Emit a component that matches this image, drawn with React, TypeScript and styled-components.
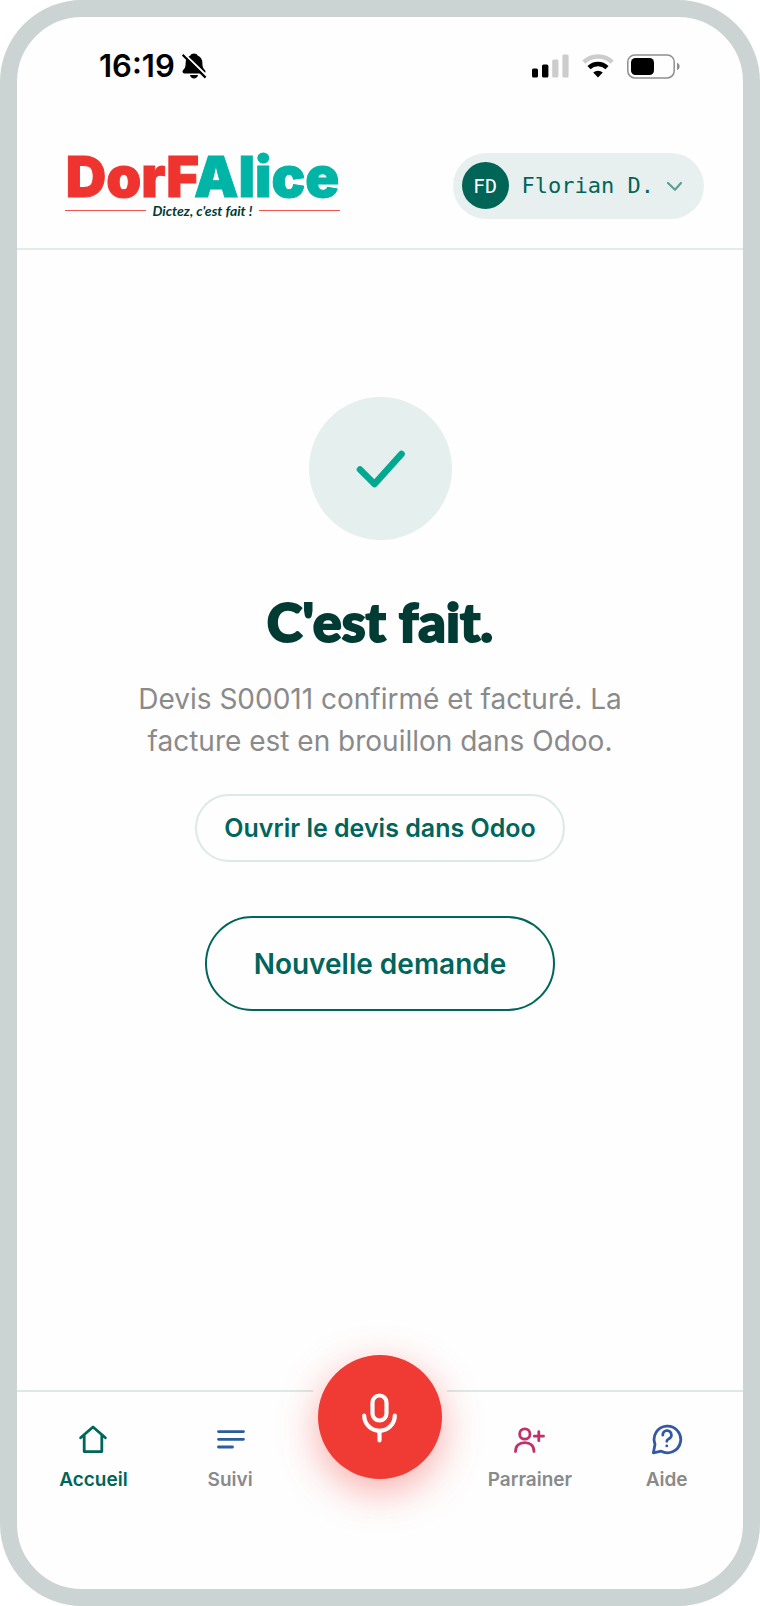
import React from "react";
import styled, { createGlobalStyle } from "styled-components";

const GlobalStyle = createGlobalStyle`
  * { box-sizing: border-box; }
  body { margin: 0; background: #ffffff; font-family: Inter, sans-serif; }
  button { font: inherit; border: 0; padding: 0; background: none; cursor: pointer; }
  h1, p { margin: 0; }
  svg { display: block; flex: none; }
`;

const Phone = styled.div`
  display: flex;
  flex-direction: column;
  min-height: 100vh;
  border: 17px solid #cbd4d2;
  border-radius: 82px;
  background: #fefefe;
`;

const StatusBar = styled.div`
  display: flex;
  align-items: center;
  justify-content: space-between;
  height: 98px;
  padding: 0 63px 0 82px;
  color: #000000;
`;

const StatusGroup = styled.div<{ $gap: number }>`
  display: flex;
  align-items: center;
  gap: ${(p) => p.$gap}px;
`;

const Clock = styled.span`
  font-size: 31px;
  line-height: 36px;
  font-weight: 600;
`;

const Header = styled.header`
  display: flex;
  align-items: center;
  justify-content: space-between;
  height: 135px;
  padding: 8px 39px 0 48px;
  border-bottom: 2px solid #e0eeea;
`;

const Logo = styled.a`
  display: flex;
  flex-direction: column;
  width: 275px;
  color: #013b33;
  text-decoration: none;
`;

const Wordmark = styled.span`
  font-size: 56px;
  line-height: 50px;
  font-weight: 900;
  text-align: center;
  white-space: nowrap;
`;

const WordPart = styled.span<{ $color: string }>`
  color: ${(p) => p.$color};
  -webkit-text-stroke: 1px ${(p) => p.$color};
`;

const Tagline = styled.span`
  display: flex;
  align-items: center;
  gap: 6px;
  font-family: Lato, sans-serif;
  font-size: 14px;
  line-height: 18px;
  font-style: italic;
  font-weight: 700;
  white-space: nowrap;

  &::before,
  &::after {
    content: "";
    flex: 1;
    height: 1px;
    background: #f2544f;
  }
`;

const Account = styled.button`
  display: flex;
  align-items: center;
  height: 66px;
  padding: 0 18px 0 9px;
  border-radius: 33px;
  background: #e8f0ef;
  color: #00655a;
  font-family: "DejaVu Sans Mono", monospace;
`;

const Avatar = styled.span`
  display: grid;
  place-items: center;
  width: 47px;
  height: 47px;
  margin-right: 13px;
  border-radius: 50%;
  background: #006457;
  color: #ffffff;
  font-size: 20px;
`;

const AccountName = styled.span`
  margin-right: 10px;
  font-size: 22px;
`;

const Main = styled.main`
  display: flex;
  flex: 1;
  flex-direction: column;
  align-items: center;
  padding: 147px 24px 40px;
  text-align: center;
`;

const Badge = styled.div`
  display: grid;
  place-items: center;
  width: 143px;
  height: 143px;
  border-radius: 50%;
  background: #e5efed;
`;

const Title = styled.h1`
  margin-top: 48px;
  color: #013b33;
  font-family: Lato, sans-serif;
  font-size: 54px;
  line-height: 68px;
  font-weight: 900;
  -webkit-text-stroke: 2px #013b33;
`;

const Message = styled.p`
  max-width: 520px;
  margin-top: 22px;
  color: #8a8a8a;
  font-size: 28px;
  line-height: 42px;
`;

const OpenLink = styled.a`
  display: flex;
  align-items: center;
  height: 68px;
  margin-top: 32px;
  padding: 0 27px;
  border: 2px solid #dceae6;
  border-radius: 34px;
  color: #00655a;
  font-size: 25px;
  font-weight: 600;
  text-decoration: none;
`;

const NewRequest = styled.button`
  height: 95px;
  margin-top: 54px;
  padding: 0 47px;
  border: 2px solid #00655a;
  border-radius: 48px;
  color: #00655a;
  font-size: 28px;
  font-weight: 600;
`;

const Nav = styled.nav`
  display: grid;
  grid-template-columns: 1fr 1fr 163px 1fr 1fr;
  height: 199px;
  padding: 0 8px;
  border-top: 2px solid #dceae6;
`;

const NavItem = styled.a<{ $active?: boolean }>`
  display: flex;
  flex-direction: column;
  align-items: center;
  gap: 12px;
  padding-top: 32px;
  color: ${(p) => (p.$active ? "#00655a" : "#8a8a8a")};
  font-size: 19px;
  line-height: 24px;
  font-weight: 600;
  text-decoration: none;
`;

const MicSlot = styled.div`
  justify-self: center;
  width: 134px;
  height: 89px;
  margin-top: -2px;
  padding: 0 5px;
  background: #fefefe;
`;

const MicButton = styled.button`
  display: grid;
  place-items: center;
  width: 124px;
  height: 124px;
  margin-top: -35px;
  border-radius: 50%;
  background: #f03b34;
  box-shadow: 0 12px 40px rgba(240, 59, 52, 0.42);
`;

const BellOff = () => (
  <svg width="25" height="26" viewBox="0 0 25 26" aria-hidden="true">
    <path d="M12 0.5C13.6 0.5 15 1.2 15.6 2.4C18.8 3.6 20.4 6.4 20.4 10C20.4 14.4 21.4 15.4 23 17.2C24 18.4 23.6 20.4 22 20.4H2.2C0.6 20.4 0 18.4 1 17.2C2.8 15.4 3.6 14.4 3.6 10C3.6 6.4 5.4 3.6 8.4 2.4C9 1.2 10.4 0.5 12 0.5Z" />
    <path d="M8 22H16C15.6 24.2 14 25.4 12 25.4C10 25.4 8.4 24.2 8 22Z" />
    <path d="M1.8 0.6L25 23" stroke="#fefefe" strokeWidth="2.2" />
    <path d="M0.6 1.8L23.6 24.6" stroke="#000" strokeWidth="2.2" />
  </svg>
);

const Signal = () => (
  <svg width="37" height="24" viewBox="0 0 37 24" aria-hidden="true">
    <rect x="0" y="14.5" width="6" height="9" rx="1.5" />
    <rect x="10" y="10.5" width="6.4" height="13" rx="1.5" />
    <rect x="20.2" y="5.5" width="6.2" height="18" rx="1.5" fill="#cccccc" />
    <rect x="30.4" y="0.5" width="6.2" height="23" rx="1.5" fill="#cccccc" />
  </svg>
);

const Wifi = () => (
  <svg width="32" height="24" viewBox="0 0 32 24" fill="none" aria-hidden="true">
    <path d="M1.8 8.2A20.5 20.5 0 0 1 30.2 8.2" stroke="#cccccc" strokeWidth="4.4" />
    <path d="M7 13.6A13 13 0 0 1 25 13.6" stroke="#000" strokeWidth="4.4" />
    <path d="M16 23.4L11.2 18.6A7 7 0 0 1 20.8 18.6Z" fill="#000" />
  </svg>
);

const Battery = () => (
  <svg width="53" height="25" viewBox="0 0 53 25" aria-hidden="true">
    <rect x="0.8" y="0.9" width="46.4" height="23" rx="7" fill="none" stroke="#8e8e8e" strokeWidth="1.5" />
    <rect x="4" y="4" width="23" height="17" rx="4.5" />
    <path d="M50 8.8C52 9.6 52.6 11 52.6 12.4S52 15.2 50 16Z" fill="#8e8e8e" />
  </svg>
);

const Chevron = () => (
  <svg width="22" height="22" viewBox="0 0 22 22" fill="none" stroke="#5a9f94" strokeWidth="2.2" strokeLinecap="round" strokeLinejoin="round" aria-hidden="true">
    <path d="M4 8L11 14.7L17 8" />
  </svg>
);

const Check = () => (
  <svg width="64" height="64" viewBox="0 0 64 64" fill="none" stroke="#00a98f" strokeWidth="6.6" strokeLinecap="round" strokeLinejoin="round" aria-hidden="true">
    <path d="M12 32.5L26.5 47L53.5 17" />
  </svg>
);

const Mic = () => (
  <svg width="48" height="54" viewBox="0 0 48 54" fill="none" stroke="#ffffff" strokeWidth="4.2" strokeLinecap="round" strokeLinejoin="round" aria-hidden="true">
    <rect x="16.5" y="5.5" width="14" height="25" rx="7" />
    <path d="M8.2 25.5A15.3 15.3 0 0 0 38.8 25.5M23.5 41V50.5" />
  </svg>
);

const navIcon = { width: 32, height: 32, viewBox: "0 0 32 32", fill: "none", strokeWidth: 2.8, strokeLinecap: "round", strokeLinejoin: "round", "aria-hidden": true } as const;

const HomeIcon = () => (
  <svg {...navIcon} stroke="#00655a">
    <path d="M3.6 13.8L16 3L28.4 13.8M7.2 11.2V27.6H24.8V11.2" />
  </svg>
);

const ListIcon = () => (
  <svg {...navIcon} stroke="#2a5d9f">
    <path d="M4.5 7.6H29.5M4.5 15.3H29.5M4.5 23H18.5" />
  </svg>
);

const InviteIcon = () => (
  <svg {...navIcon} stroke="#c0316a">
    <circle cx="10.8" cy="10" r="5.2" />
    <path d="M1.5 27.6C1.5 21.4 5.500 18.600 10.800 18.600S20 21.400 20 27.600M24.800 7.700V16.700M20.300 12.200H29.500" />
  </svg>
);

const HelpIcon = () => (
  <svg {...navIcon} stroke="#3558a5">
    <path d="M2.400 28.800L4 20.200A13.300 13.300 0 1 1 10.200 27.200Z" />
    <path d="M11.800 11.200A4.300 4.300 0 1 1 17.600 14.900C16.200 15.600 15.800 16.200 15.800 17.300M15.800 21.800V21.900" />
  </svg>
);

export default function App() {
  return (
    <>
      <GlobalStyle />
      <Phone>
        <StatusBar>
          <StatusGroup $gap={7}>
            <Clock>16:19</Clock>
            <BellOff />
          </StatusGroup>
          <StatusGroup $gap={13}>
            <Signal />
            <Wifi />
            <Battery />
          </StatusGroup>
        </StatusBar>
        <Header>
          <Logo href="#accueil">
            <Wordmark>
              <WordPart $color="#ef332f">DorF</WordPart>
              <WordPart $color="#00b4a6">Alice</WordPart>
            </Wordmark>
            <Tagline>Dictez, c'est fait !</Tagline>
          </Logo>
          <Account type="button">
            <Avatar>FD</Avatar>
            <AccountName>Florian D.</AccountName>
            <Chevron />
          </Account>
        </Header>
        <Main>
          <Badge>
            <Check />
          </Badge>
          <Title>C'est fait.</Title>
          <Message>Devis S00011 confirmé et facturé. La facture est en brouillon dans Odoo.</Message>
          <OpenLink href="#devis">Ouvrir le devis dans Odoo</OpenLink>
          <NewRequest type="button">Nouvelle demande</NewRequest>
        </Main>
        <Nav>
          <NavItem href="#accueil" $active aria-current="page">
            <HomeIcon />
            Accueil
          </NavItem>
          <NavItem href="#suivi">
            <ListIcon />
            Suivi
          </NavItem>
          <MicSlot>
            <MicButton type="button" aria-label="Dicter">
              <Mic />
            </MicButton>
          </MicSlot>
          <NavItem href="#parrainer">
            <InviteIcon />
            Parrainer
          </NavItem>
          <NavItem href="#aide">
            <HelpIcon />
            Aide
          </NavItem>
        </Nav>
      </Phone>
    </>
  );
}
